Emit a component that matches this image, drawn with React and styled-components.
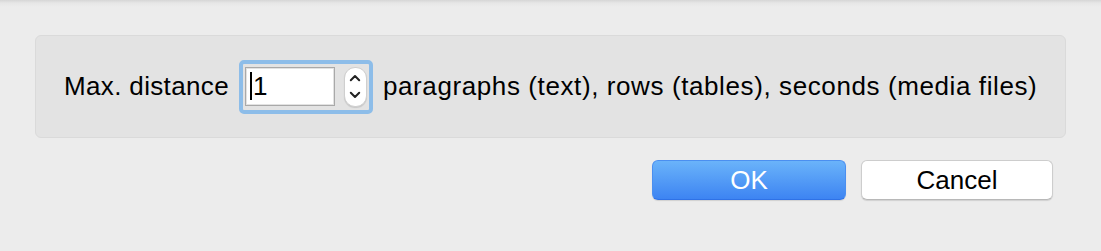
import React from "react";
import styled, { createGlobalStyle } from "styled-components";

const Global = createGlobalStyle`
  html, body { margin: 0; padding: 0; }
  body {
    background: #ececec;
    font-family: "Liberation Sans", Arial, sans-serif;
    -webkit-font-smoothing: antialiased;
  }
`;

const Window = styled.div`
  width: 1101px;
  height: 251px;
  box-sizing: border-box;
  padding: 35px 35px 0 35px;
  background: linear-gradient(#d6d6d6 0px, #e6e6e6 3px, #ececec 7px, #ececec 100%);
  display: flex;
  flex-direction: column;
`;

const GroupBox = styled.div`
  height: 103px;
  box-sizing: border-box;
  background: #e3e3e3;
  border: 1px solid #dadada;
  border-radius: 6px;
  display: flex;
  align-items: center;
  padding-left: 28px;
  gap: 10px;
`;

const Label = styled.span`
  font-size: 26px;
  letter-spacing: ${(p) => p.$spacing}px;
  color: #000;
  white-space: nowrap;
`;

const FocusRing = styled.div`
  display: flex;
  align-items: flex-start;
  gap: 9px;
  border: 4px solid #8dbde9;
  border-radius: 5px;
  padding: 3px 2px 3px 2px;
`;

const Field = styled.div`
  width: 90px;
  height: 39px;
  box-sizing: border-box;
  background: #fff;
  border: 1px solid #a9a9a9;
  box-shadow: inset 0 0 0 1px #e2e2e2;
  display: flex;
  align-items: center;
  padding-left: 4px;
  font-size: 26px;
  color: #000;
`;

const Caret = styled.span`
  display: inline-block;
  width: 2px;
  height: 28px;
  background: #000;
  margin-right: 1px;
`;

const Stepper = styled.div`
  width: 23px;
  height: 40px;
  box-sizing: border-box;
  background: #fff;
  border: 1px solid #cfcfcf;
  border-radius: 11px;
  box-shadow: 0 1px 1px rgba(0, 0, 0, 0.12);
  display: flex;
  flex-direction: column;
  align-items: center;
  justify-content: center;
  gap: 9px;
`;

const Chevron = ({ down }) => (
  <svg width="12" height="8" viewBox="0 0 12 8">
    <path
      d={down ? "M1.8 1.8 L6 6 L10.2 1.8" : "M1.8 6.2 L6 2 L10.2 6.2"}
      fill="none"
      stroke="#222"
      strokeWidth="2"
      strokeLinecap="round"
      strokeLinejoin="round"
    />
  </svg>
);

const ButtonRow = styled.div`
  display: flex;
  justify-content: flex-end;
  gap: 15px;
  margin-top: 22px;
  padding-right: 13px;
`;

const Button = styled.button`
  height: 40px;
  width: ${(p) => p.$w}px;
  box-sizing: border-box;
  border-radius: 6px;
  font-family: "Liberation Sans", Arial, sans-serif;
  font-size: 26px;
  padding: 0;
  display: flex;
  align-items: center;
  justify-content: center;
  cursor: default;
  ${(p) =>
    p.$primary
      ? `
    color: #fff;
    background: linear-gradient(#6ab3fa, #3d84f2);
    border: 1px solid #4b8ff0;
    border-bottom-color: #2f72e6;
    box-shadow: 0 1px 1px rgba(0,0,0,0.12);
  `
      : `
    color: #000;
    background: #fff;
    border: 1px solid #cdcdcd;
    border-bottom-color: #b8b8b8;
    box-shadow: 0 1px 1px rgba(0,0,0,0.12);
  `}
`;

export default function App() {
  return (
    <>
      <Global />
      <Window>
        <GroupBox>
          <Label $spacing={0.35}>Max. distance</Label>
          <FocusRing>
            <Field>
              <Caret />
              1
            </Field>
            <Stepper>
              <Chevron />
              <Chevron down />
            </Stepper>
          </FocusRing>
          <Label $spacing={0.6}>paragraphs (text), rows (tables), seconds (media files)</Label>
        </GroupBox>
        <ButtonRow>
          <Button $primary $w={194}>OK</Button>
          <Button $w={192}>Cancel</Button>
        </ButtonRow>
      </Window>
    </>
  );
}
